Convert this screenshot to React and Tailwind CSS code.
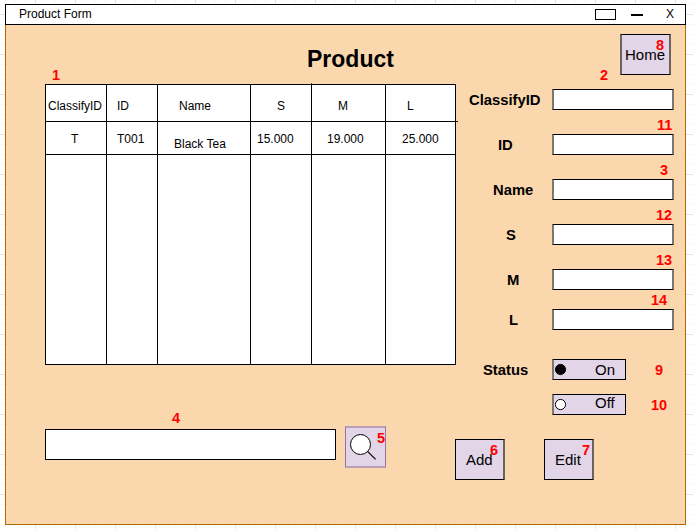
import React from "react";

const columns = [
  { head: "ClassifyID", value: "T", width: "w-[61px]", headPad: "pl-[2px] pt-[14px]", valuePad: "pl-[25px] pt-[10px]" },
  { head: "ID", value: "T001", width: "w-[51px]", headPad: "pl-[10px] pt-[14px]", valuePad: "pl-[10px] pt-[10px]" },
  { head: "Name", value: "Black Tea", width: "w-[93px]", headPad: "pl-[21px] pt-[14px]", valuePad: "pl-[16px] pt-[15px]" },
  { head: "S", value: "15.000", width: "w-[61px]", headPad: "pl-[26px] pt-[14px]", valuePad: "pl-[6px] pt-[10px]" },
  { head: "M", value: "19.000", width: "w-[74px]", headPad: "pl-[26px] pt-[14px]", valuePad: "pl-[15px] pt-[10px]" },
  { head: "L", value: "25.000", width: "w-[70px]", headPad: "pl-[21px] pt-[14px]", valuePad: "pl-[16px] pt-[10px]" },
];

const fields = [
  { label: "ClassifyID", pad: "pl-[13px]", gap: "mb-6" },
  { label: "ID", pad: "pl-[42px]", gap: "mb-6" },
  { label: "Name", pad: "pl-[37px]", gap: "mb-6" },
  { label: "S", pad: "pl-[50px]", gap: "mb-6" },
  { label: "M", pad: "pl-[51px]", gap: "mb-[19px]" },
  { label: "L", pad: "pl-[53px]", gap: "mb-[29px]" },
];

const markers = [
  { n: 1, at: "left-[52px] top-[65px]" },
  { n: 2, at: "left-[600px] top-[65px]" },
  { n: 3, at: "left-[660px] top-[160px]" },
  { n: 4, at: "left-[172px] top-[408px]" },
  { n: 5, at: "left-[377px] top-[428px]" },
  { n: 6, at: "left-[490px] top-[440px]" },
  { n: 7, at: "left-[582px] top-[440px]" },
  { n: 8, at: "left-[656px] top-[35px]" },
  { n: 9, at: "left-[655px] top-[360px]" },
  { n: 10, at: "left-[651px] top-[395px]" },
  { n: 11, at: "left-[657px] top-[115px]" },
  { n: 12, at: "left-[656px] top-[205px]" },
  { n: 13, at: "left-[656px] top-[250px]" },
  { n: 14, at: "left-[651px] top-[290px]" },
];

function TitleBar() {
  return (
    <div className="flex h-[21px] border border-black bg-white text-[12px] leading-[14px]">
      <span className="w-[589px] pl-[13px] pt-[2px]">Product Form</span>
      <span className="mt-1 h-[11px] w-[21px] border border-black" />
      <span className="ml-[15px] mt-[9px] h-[2px] w-3 bg-black" />
      <span className="ml-[23px] pt-[2px]">X</span>
    </div>
  );
}

function ProductTable() {
  return (
    <div className="relative ml-[39px] flex h-[281px] w-[411px] border border-black bg-white text-[12px] leading-[14px]">
      {columns.map((c, i) => (
        <div key={c.head} className={`${c.width} shrink-0 ${i < 5 ? "border-r border-black" : ""}`}>
          <div className={`h-[37px] border-b border-black ${c.headPad}`}>{c.head}</div>
          <div className={`h-[33px] whitespace-nowrap border-b border-black ${c.valuePad}`}>{c.value}</div>
        </div>
      ))}
      <span className="absolute left-[410px] top-[36px] h-px w-[2px] bg-black" />
      <span className="absolute left-[265px] top-[-2px] h-px w-px bg-black/60" />
    </div>
  );
}

function Toggle({ on, label, textClass }) {
  return (
    <div className="flex h-[21px] w-[74px] border border-l-2 border-black border-l-[#7f766c] bg-[#e1d5e7]">
      <svg className="ml-px mt-[3px] shrink-0" width="12" height="13" viewBox="0 0 12 13">
        <circle cx="5.5" cy="6.5" r="5.1" fill={on ? "#000" : "#fff"} stroke="#000" />
      </svg>
      <span className={`ml-[28px] leading-5 ${textClass}`}>{label}</span>
    </div>
  );
}

function ActionButton({ label }) {
  return (
    <div className="h-[41px] w-[50px] border border-r-2 border-black border-r-[#6b645e] bg-[#e1d5e7] pl-[10px] pt-[10px] leading-5">
      {label}
    </div>
  );
}

function SearchRow() {
  return (
    <div className="ml-[39px] mt-[61px] flex">
      <div className="mt-[3px] h-[31px] w-[291px] border border-black bg-white" />
      <div className="ml-[9px] h-[42px] w-[41px] border border-y-2 border-[#9673a6] border-y-[#bb9fb8] bg-[#e1d5e7]">
        <svg width="39" height="38" viewBox="346 428 39 38">
          <circle cx="360.5" cy="444.5" r="10" fill="#fff" stroke="#000" />
          <path d="M367.8 451.6L375.6 459.4" stroke="#000" strokeWidth="1.2" fill="none" />
        </svg>
      </div>
    </div>
  );
}

function ProductForm() {
  return (
    <div className="w-[229px] pt-[5px] text-[15px]">
      {fields.map((f) => (
        <div key={f.label} className={`flex h-[21px] ${f.gap}`}>
          <span className={`w-[96px] pt-px text-[14.8px] font-bold leading-5 ${f.pad}`}>{f.label}</span>
          <div className="w-[122px] border-x-2 border-y border-x-[#7f766c] border-y-black bg-white" />
        </div>
      ))}
      <div className="flex">
        <span className="w-[96px] pl-[27px] pt-px text-[14.8px] font-bold leading-5">Status</span>
        <div className="flex flex-col gap-[14px]">
          <Toggle on label="On" textClass="" />
          <Toggle label="Off" textClass="-mt-[2px]" />
        </div>
      </div>
      <div className="-ml-px mt-6 flex gap-[39px]">
        <ActionButton label="Add" />
        <ActionButton label="Edit" />
      </div>
    </div>
  );
}

export default function App() {
  return (
    <div className="relative h-[529px] w-[693px] overflow-hidden bg-white bg-[linear-gradient(to_right,#e5e5e5_1px,transparent_1px),linear-gradient(to_bottom,#e5e5e5_1px,transparent_1px),linear-gradient(to_right,#f8f8f8_1px,transparent_1px),linear-gradient(to_bottom,#f8f8f8_1px,transparent_1px)] bg-[size:40px_40px,40px_40px,10px_10px,10px_10px] bg-[position:35px_0px,0px_14px,5px_0px,0px_4px] pl-[5px] pt-1 font-['Liberation_Sans',Arial,sans-serif] text-black">
      <div className="w-[681px]">
        <TitleBar />
        <div className="h-[500px] border border-t-0 border-[#b46504] bg-[#fad7ac]">
          <div className="flex h-[59px]">
            <h1 className="w-[614px] pl-[301px] pt-5 text-[23px] font-bold leading-7">Product</h1>
            <div className="mt-[9px] h-[41px] w-[51px] shrink-0 border-x-2 border-y border-x-[#6b645e] border-y-black bg-[#e1d5e7] pl-[3px] pt-[10px] text-[15px] leading-5">
              Home
            </div>
          </div>
          <div className="flex">
            <div className="w-[450px]">
              <ProductTable />
              <SearchRow />
            </div>
            <ProductForm />
          </div>
        </div>
      </div>
      {markers.map((m) => (
        <span key={m.n} className={`absolute text-[14.5px] font-bold leading-5 text-[#ff0000] ${m.at}`}>
          {m.n}
        </span>
      ))}
    </div>
  );
}
